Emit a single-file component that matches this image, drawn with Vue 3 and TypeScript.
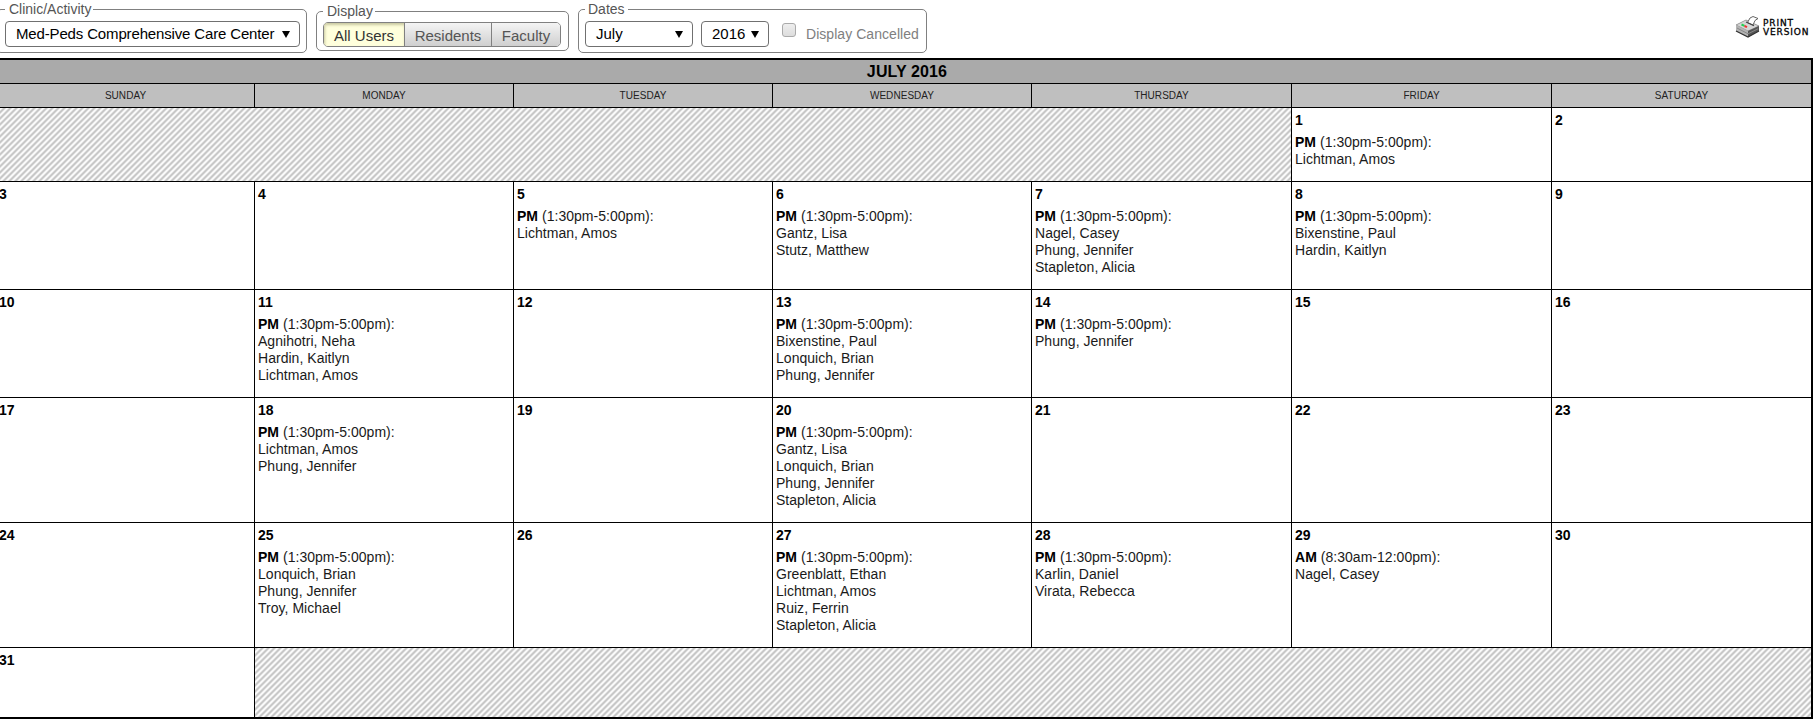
<script setup lang="ts">
interface Day { n: number; slot?: string; time?: string; names?: string[] }
interface Week { height: number; before?: number; after?: number; days: Day[] }

const dayNames = ['SUNDAY', 'MONDAY', 'TUESDAY', 'WEDNESDAY', 'THURSDAY', 'FRIDAY', 'SATURDAY']

const pm = (n: number, ...names: string[]): Day => ({ n, slot: 'PM', time: '(1:30pm-5:00pm):', names })

const weeks: Week[] = [
  { height: 74, before: 5, days: [pm(1, 'Lichtman, Amos'), { n: 2 }] },
  {
    height: 108,
    days: [
      { n: 3 }, { n: 4 }, pm(5, 'Lichtman, Amos'), pm(6, 'Gantz, Lisa', 'Stutz, Matthew'),
      pm(7, 'Nagel, Casey', 'Phung, Jennifer', 'Stapleton, Alicia'),
      pm(8, 'Bixenstine, Paul', 'Hardin, Kaitlyn'), { n: 9 },
    ],
  },
  {
    height: 108,
    days: [
      { n: 10 }, pm(11, 'Agnihotri, Neha', 'Hardin, Kaitlyn', 'Lichtman, Amos'), { n: 12 },
      pm(13, 'Bixenstine, Paul', 'Lonquich, Brian', 'Phung, Jennifer'),
      pm(14, 'Phung, Jennifer'), { n: 15 }, { n: 16 },
    ],
  },
  {
    height: 125,
    days: [
      { n: 17 }, pm(18, 'Lichtman, Amos', 'Phung, Jennifer'), { n: 19 },
      pm(20, 'Gantz, Lisa', 'Lonquich, Brian', 'Phung, Jennifer', 'Stapleton, Alicia'),
      { n: 21 }, { n: 22 }, { n: 23 },
    ],
  },
  {
    height: 125,
    days: [
      { n: 24 }, pm(25, 'Lonquich, Brian', 'Phung, Jennifer', 'Troy, Michael'), { n: 26 },
      pm(27, 'Greenblatt, Ethan', 'Lichtman, Amos', 'Ruiz, Ferrin', 'Stapleton, Alicia'),
      pm(28, 'Karlin, Daniel', 'Virata, Rebecca'),
      { n: 29, slot: 'AM', time: '(8:30am-12:00pm):', names: ['Nagel, Casey'] }, { n: 30 },
    ],
  },
  { height: 69, after: 6, days: [{ n: 31 }] },
]
</script>

<template>
  <div class="page">
    <header class="toolbar">
      <fieldset class="group clinic">
        <legend>Clinic/Activity</legend>
        <div class="select clinic-select"><span>Med-Peds Comprehensive Care Center</span><i class="arrow"></i></div>
      </fieldset>
      <fieldset class="group display">
        <legend>Display</legend>
        <div class="buttons">
          <button class="on">All Users</button><button>Residents</button><button>Faculty</button>
        </div>
      </fieldset>
      <fieldset class="group dates">
        <legend>Dates</legend>
        <div class="select month"><span>July</span><i class="arrow"></i></div>
        <div class="select year"><span>2016</span><i class="arrow"></i></div>
        <span class="check"></span>
        <span class="check-label">Display Cancelled</span>
      </fieldset>
      <a class="print">
        <svg width="25" height="24" viewBox="0 0 25 24">
          <path d="M1 10L11 5L24 11V16L13 22L1 16Z" fill="#999" />
          <path d="M1 10L11 5L24 11L13 16Z" fill="#d6d6d6" stroke="#888" stroke-width=".7" />
          <path d="M1 10L13 16V22L1 16Z" fill="#b4b4b4" />
          <path d="M13 16L24 11V16L13 22Z" fill="#555" />
          <path d="M1 16L13 22L24 16" fill="none" stroke="#333" stroke-width="1.3" />
          <path d="M2 13L13 18.8L23 13.8" fill="none" stroke="#888" />
          <path d="M12.5 7.5L15 3L18 1.5L23 3.5L20 5.5L18 10Z" fill="#fff" stroke="#555" stroke-width=".9" />
          <path d="M11 7L19 10.8" stroke="#444" stroke-width="1.1" />
          <path d="M6.5 9.5L9.5 10.8" stroke="#20d050" stroke-width="2" />
          <path d="M9.5 11L12 12.2" stroke="#e33" stroke-width="2" />
        </svg>
        <span class="print-text"><b>PRINT</b><b>VERSION</b></span>
      </a>
    </header>

    <main class="calendar">
      <div class="title">JULY 2016</div>
      <div class="row names">
        <div v-for="d in dayNames" :key="d" class="name">{{ d }}</div>
      </div>
      <div v-for="(w, i) in weeks" :key="i" class="row week" :style="{ height: w.height + 'px' }">
        <div v-if="w.before" class="hatch" :style="{ gridColumn: 'span ' + w.before }"></div>
        <div v-for="d in w.days" :key="d.n" class="day">
          <div class="num">{{ d.n }}</div>
          <template v-if="d.slot">
            <div class="line"><b>{{ d.slot }}</b> {{ d.time }}</div>
            <div v-for="p in d.names" :key="p" class="line">{{ p }}</div>
          </template>
        </div>
        <div v-if="w.after" class="hatch" :style="{ gridColumn: 'span ' + w.after }"></div>
      </div>
    </main>
  </div>
</template>

<style>
body {
  background: #fff;
  overflow: hidden;
}
</style>

<style scoped>
.page {
  width: 1814px;
  height: 723px;
  overflow: hidden;
  font-family: "Liberation Sans", Arial, sans-serif;
  color: #000;
}
.page * {
  box-sizing: border-box;
}
.toolbar {
  display: flex;
  align-items: flex-start;
  height: 58px;
}
.group {
  display: flex;
  align-items: flex-start;
  min-width: 0;
  margin: 0;
  padding: 0 6px;
  border: 1px solid #808080;
  border-radius: 5px;
}
legend {
  height: 17px;
  padding: 0 3px;
  font-size: 14px;
  line-height: 17px;
  color: #555;
  white-space: nowrap;
}
.clinic {
  width: 311px;
  height: 52px;
  margin: 1px 0 0 -4px;
  padding-left: 8px;
}
.clinic legend,
.display legend {
  padding-left: 4px;
  padding-right: 2px;
}
.display {
  width: 253px;
  height: 48px;
  margin: 3px 0 0 9px;
}
.dates {
  width: 349px;
  height: 52px;
  margin: 1px 0 0 9px;
}
.select {
  display: flex;
  align-items: center;
  justify-content: space-between;
  height: 26px;
  margin-top: 3px;
  padding: 0 9px 1px 10px;
  border: 1px solid #707070;
  border-radius: 4px;
  font-size: 15px;
  white-space: nowrap;
}
.clinic-select {
  width: 295px;
  letter-spacing: -0.15px;
}
.month {
  width: 108px;
}
.year {
  width: 68px;
  margin-left: 8px;
}
.arrow {
  margin-top: 1px;
  border: solid transparent;
  border-width: 7px 4px 0;
  border-top-color: #000;
}
.buttons {
  display: flex;
  height: 25px;
  margin-top: 2px;
  border: 1px solid #808080;
  border-radius: 5px;
  overflow: hidden;
}
button {
  width: 87px;
  padding: 2px 0 0;
  border: 0;
  border-right: 1px solid #808080;
  background: linear-gradient(#f4f4f4, #cfcfcf);
  font: 15px "Liberation Sans", Arial, sans-serif;
  color: #555;
}
button.on {
  width: 81px;
  background: #ffffdc;
  box-shadow: inset 1px 2px 3px #c8c8a0;
  color: #333;
}
button:last-child {
  width: 68px;
  border-right: 0;
}
.check {
  width: 14px;
  height: 14px;
  margin: 5px 0 0 13px;
  border: 1px solid #aaa;
  border-radius: 3px;
  background: linear-gradient(#eee, #ddd);
}
.check-label {
  margin: 8px 0 0 10px;
  font-size: 14px;
  line-height: 17px;
  letter-spacing: 0.05px;
  color: #808080;
  white-space: nowrap;
}
.print {
  display: flex;
  margin: 15px 5px 0 auto;
}
.print-text {
  display: flex;
  flex-direction: column;
  width: 46px;
  margin: 4px 0 0 3px;
  font: 400 9px/9px "DejaVu Sans", sans-serif;
  letter-spacing: 0.85px;
  -webkit-text-stroke: 0.3px #000;
}
.print-text b {
  font-weight: 400;
}
.calendar {
  width: 1818px;
  height: 661px;
  margin-left: -5px;
  border: 2px solid #000;
}
.title {
  height: 24px;
  padding-left: 6px;
  border-bottom: 1px solid #000;
  background: #aaa;
  font-size: 16px;
  font-weight: 700;
  line-height: 23px;
  letter-spacing: 0.12px;
  text-align: center;
}
.row {
  display: grid;
  grid-template-columns: 258px 259px 259px 259px 260px 260px 259px;
}
.names {
  height: 24px;
  border-bottom: 1px solid #000;
  background: #bfbfbf;
}
.name {
  border-right: 1px solid #000;
  font-size: 10px;
  line-height: 23px;
  letter-spacing: 0.05px;
  text-align: center;
  color: #222;
}
.week {
  border-bottom: 1px solid #000;
}
.week:last-child {
  border-bottom: 0;
}
.day,
.hatch {
  border-right: 1px solid #000;
}
.day {
  padding: 3px 3px 0;
}
.day:first-child {
  padding-left: 2px;
}
.name:last-child,
.day:last-child,
.hatch:last-child {
  border-right: 0;
}
.hatch {
  background: linear-gradient(135deg, #c8c8c8 20%, #fafafa 30% 45%, #c8c8c8 55% 70%, #fafafa 80% 95%, #c8c8c8) 0 0 / 6px 6px;
}
.num {
  height: 23px;
  font-size: 14px;
  font-weight: 700;
  line-height: 18px;
}
.line {
  font-size: 14px;
  line-height: 17px;
  letter-spacing: 0.03px;
  white-space: nowrap;
  color: #1a1a1a;
}
.line b {
  color: #000;
}
</style>
